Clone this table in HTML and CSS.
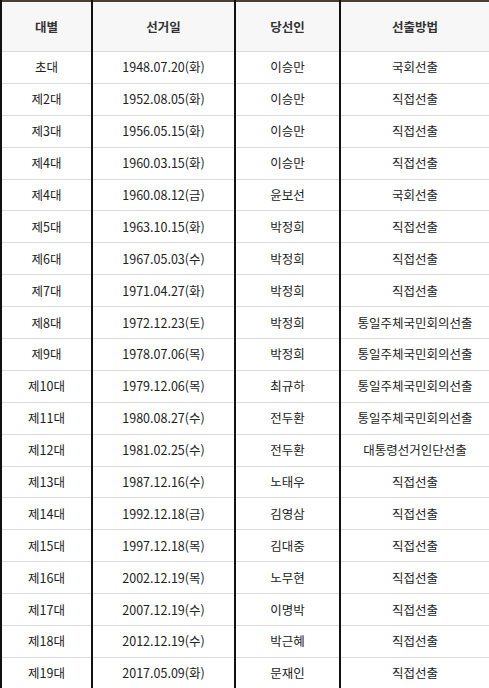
FILE: index.html
```html
<!DOCTYPE html>
<html lang="ko">
<head>
<meta charset="utf-8">
<title>역대 대통령 선거</title>
<link rel="stylesheet" href="styles.css">
</head>
<body>
<table class="elections">
  <colgroup>
    <col class="c1"><col class="c2"><col class="c3"><col class="c4">
  </colgroup>
  <thead>
    <tr><th>대별</th><th>선거일</th><th>당선인</th><th>선출방법</th></tr>
  </thead>
  <tbody>
    <tr><td>초대</td><td>1948.07.20(화)</td><td>이승만</td><td>국회선출</td></tr>
    <tr><td>제2대</td><td>1952.08.05(화)</td><td>이승만</td><td>직접선출</td></tr>
    <tr><td>제3대</td><td>1956.05.15(화)</td><td>이승만</td><td>직접선출</td></tr>
    <tr><td>제4대</td><td>1960.03.15(화)</td><td>이승만</td><td>직접선출</td></tr>
    <tr><td>제4대</td><td>1960.08.12(금)</td><td>윤보선</td><td>국회선출</td></tr>
    <tr><td>제5대</td><td>1963.10.15(화)</td><td>박정희</td><td>직접선출</td></tr>
    <tr><td>제6대</td><td>1967.05.03(수)</td><td>박정희</td><td>직접선출</td></tr>
    <tr><td>제7대</td><td>1971.04.27(화)</td><td>박정희</td><td>직접선출</td></tr>
    <tr><td>제8대</td><td>1972.12.23(토)</td><td>박정희</td><td>통일주체국민회의선출</td></tr>
    <tr><td>제9대</td><td>1978.07.06(목)</td><td>박정희</td><td>통일주체국민회의선출</td></tr>
    <tr><td>제10대</td><td>1979.12.06(목)</td><td>최규하</td><td>통일주체국민회의선출</td></tr>
    <tr><td>제11대</td><td>1980.08.27(수)</td><td>전두환</td><td>통일주체국민회의선출</td></tr>
    <tr><td>제12대</td><td>1981.02.25(수)</td><td>전두환</td><td>대통령선거인단선출</td></tr>
    <tr><td>제13대</td><td>1987.12.16(수)</td><td>노태우</td><td>직접선출</td></tr>
    <tr><td>제14대</td><td>1992.12.18(금)</td><td>김영삼</td><td>직접선출</td></tr>
    <tr><td>제15대</td><td>1997.12.18(목)</td><td>김대중</td><td>직접선출</td></tr>
    <tr><td>제16대</td><td>2002.12.19(목)</td><td>노무현</td><td>직접선출</td></tr>
    <tr><td>제17대</td><td>2007.12.19(수)</td><td>이명박</td><td>직접선출</td></tr>
    <tr><td>제18대</td><td>2012.12.19(수)</td><td>박근혜</td><td>직접선출</td></tr>
    <tr><td>제19대</td><td>2017.05.09(화)</td><td>문재인</td><td>직접선출</td></tr>
  </tbody>
</table>
</body>
</html>
```
FILE: styles.css
```css
html, body {
  margin: 0;
  padding: 0;
  background: #fff;
}
body {
  font-family: "Noto Sans CJK KR", "Noto Sans", sans-serif;
  font-size: 12.5px;
  color: #222;
}
.elections {
  width: 489px;
  table-layout: fixed;
  border-collapse: collapse;
  border-top: 2px solid #4b3f33;
  border-left: 2px solid #111;
  border-right: 2px solid #111;
  border-bottom: 2px solid #111;
}
.c1 { width: 91px; }
.c2 { width: 143px; }
.c3 { width: 105px; }
.c4 { width: 150px; }
.elections th,
.elections td {
  padding: 0;
  text-align: center;
  border-left: 2px solid #111;
  border-right: 2px solid #111;
  border-bottom: 1px solid #dcdcdc;
  line-height: 16px;
}
.elections th {
  height: 49px;
  background: #f7f7f7;
  font-weight: 700;
  color: #333;
  font-size: 12.5px;
}
.elections td {
  height: 30.9px;
}
.elections tbody tr:last-child td {
  border-bottom: 2px solid #111;
}
```
